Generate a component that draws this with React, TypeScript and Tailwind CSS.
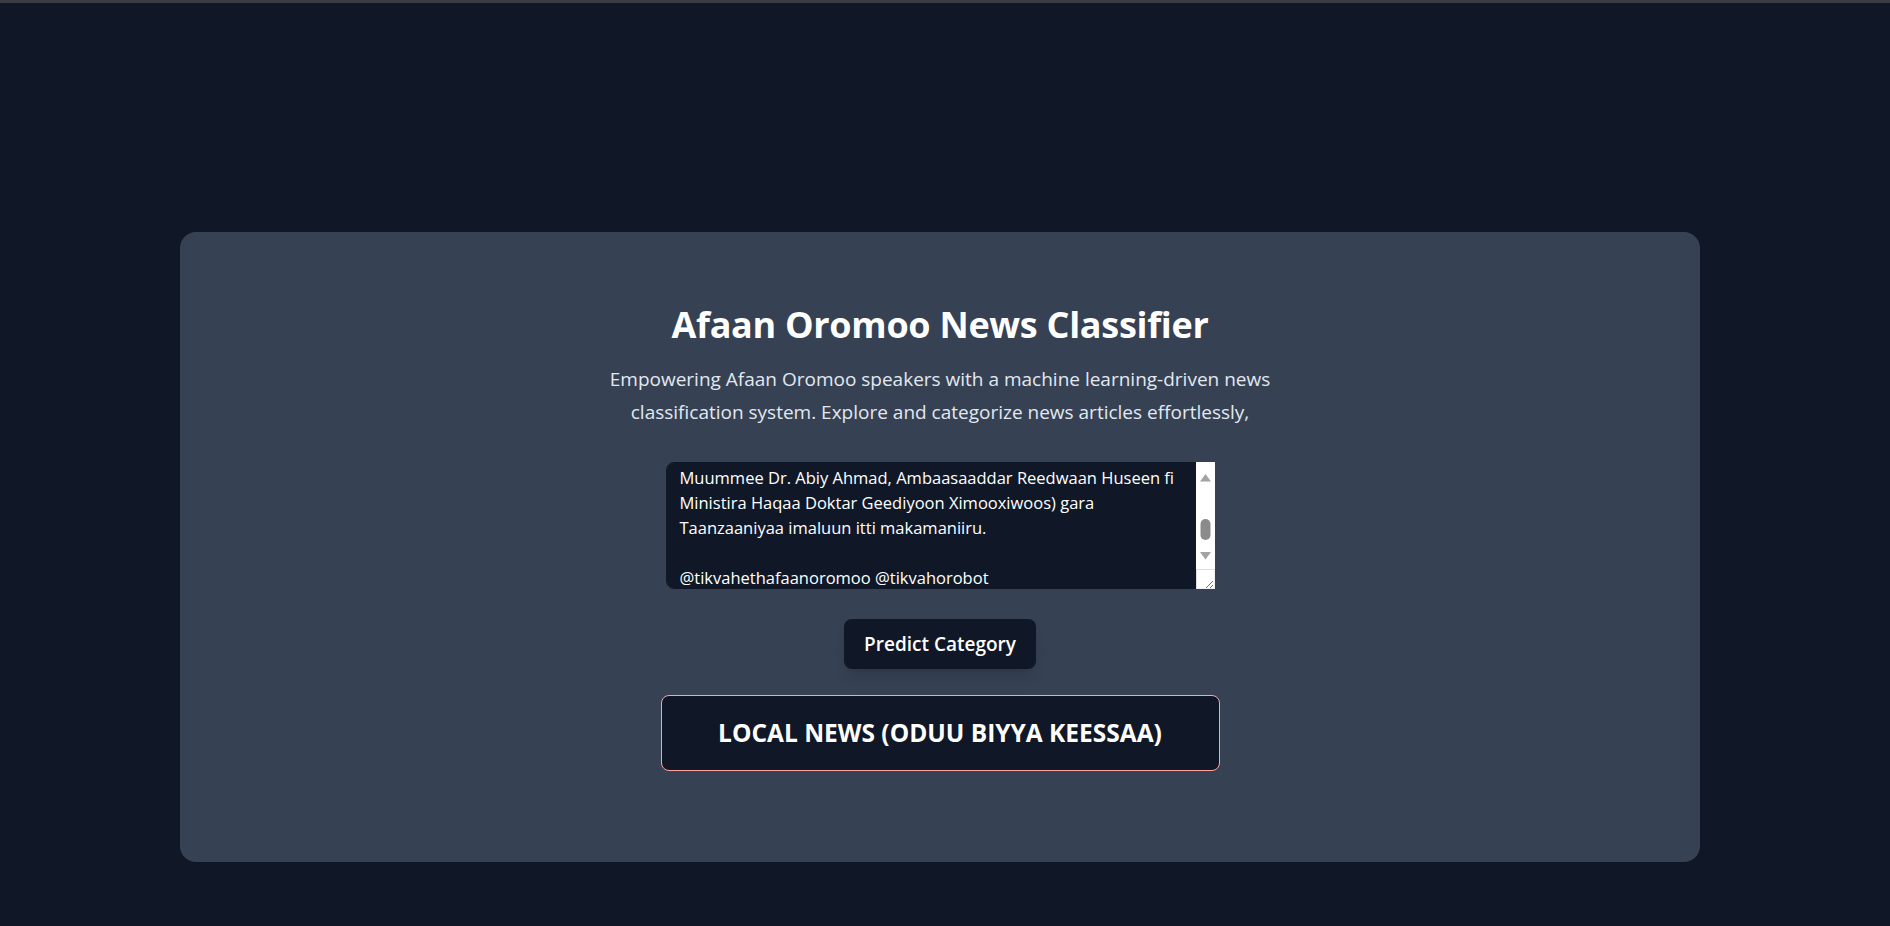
import React, { useEffect, useRef, useState } from "react";

const sampleNews =
  "Pirezidantiin Mootummaa Naannoo Oromiyaa Obbo Shimallis Abdiisaa fi qondaalonni olaanoo biroo Yuunivarsiitii Dar es Salaam keessatti marii qophaa'e irratti hirmaatan. Koreen kun (Itti Aanaa Ministira\nMuummee Dr. Abiy Ahmad, Ambaasaaddar Reedwaan Huseen fi Ministira Haqaa Doktar Geediyoon Ximooxiwoos) gara Taanzaaniyaa imaluun itti makamaniiru.\n\n@tikvahethafaanoromoo @tikvahorobot";

// light windows-style scrollbar drawn over the textarea's right edge
const ScrollbarArt = () => (
  <svg
    aria-hidden
    width="19"
    height="127"
    viewBox="0 0 19 127"
    className="absolute right-0 top-0 pointer-events-none"
  >
    <rect x="0" y="0" width="19" height="127" fill="#ffffff" />
    <polygon points="4,19.5 9.5,12 15,19.5" fill="#a3a3a3" />
    <rect x="4.5" y="57" width="10" height="21" rx="5" fill="#8b8b8b" />
    <polygon points="4,90 15,90 9.5,97.5" fill="#a3a3a3" />
    <rect x="0.5" y="107.5" width="18.5" height="19.5" fill="none" stroke="#dedede" />
    <path d="M17 119 L10 126 M17 123 L14 126" stroke="#6e6e6e" strokeWidth="1" />
  </svg>
);

export default function App() {
  const [text, setText] = useState(sampleNews);
  const [category] = useState("LOCAL NEWS (ODUU BIYYA KEESSAA)");
  const areaRef = useRef<HTMLTextAreaElement>(null);

  useEffect(() => {
    // keep the end of the article in view, like after pasting
    const el = areaRef.current;
    if (el) el.scrollTop = el.scrollHeight - el.clientHeight - 2;
  }, []);

  return (
    <div className="min-h-screen bg-gray-900 border-t-[3px] border-[#3b3d42] font-['Open_Sans','Noto_Sans',sans-serif] text-white">
      <div className="pt-[229px] pb-[65px] pl-[180px]">
        <div className="w-[1520px] bg-gray-700 rounded-2xl pt-[73px] pb-[91px] flex flex-col items-center">
          <h1 className="text-[36px] leading-10 font-bold tracking-[-0.3px]">
            Afaan Oromoo News Classifier
          </h1>
          <p className="mt-[18px] max-w-[690px] text-center text-[19px] leading-[32.5px] text-[#e2e8f0]">
            Empowering Afaan Oromoo speakers with a machine learning-driven news classification
            system. Explore and categorize news articles effortlessly,
          </p>

          <div className="relative mt-[34px] w-[549px] h-[127px]">
            <textarea
              ref={areaRef}
              value={text}
              onChange={(e) => setText(e.target.value)}
              className="block w-full h-full bg-gray-900 text-white rounded-lg pl-[13px] pr-[31px] pt-3 pb-0 text-[16.5px] leading-[25px] outline-none border border-gray-900"
            />
            <ScrollbarArt />
          </div>

          <button className="mt-[30px] h-[50px] px-5 bg-gray-900 rounded-lg shadow-lg text-[19px] font-semibold">
            Predict Category
          </button>

          <div className="mt-[26px] w-[559px] h-[76px] flex items-center justify-center bg-gray-900 border border-red-300 rounded-lg">
            <span className="text-[24.5px] font-bold">{category}</span>
          </div>
        </div>
      </div>
    </div>
  );
}
